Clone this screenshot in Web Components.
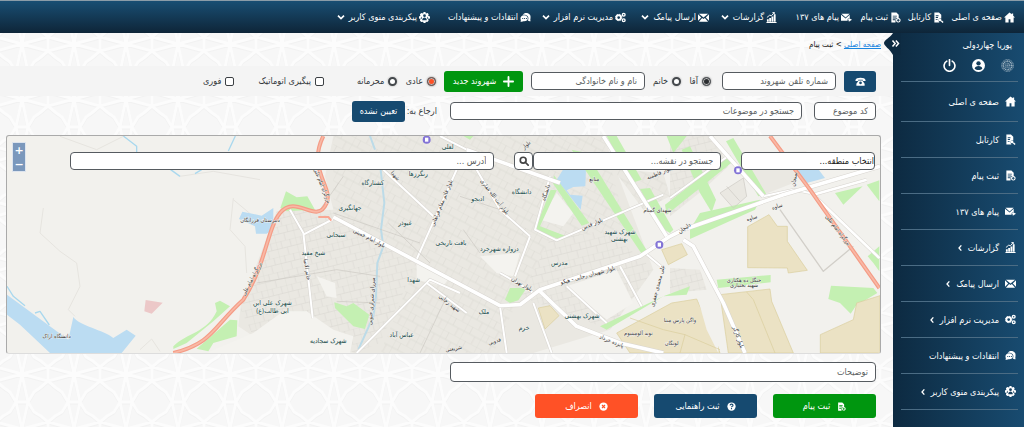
<!DOCTYPE html>
<html lang="fa" dir="rtl">
<head>
<meta charset="utf-8">
<meta name="viewport" content="width=device-width, initial-scale=1">
<title>ثبت پیام</title>
<style>
  body { margin: 0; font-family: "DejaVu Sans Condensed", "DejaVu Sans", sans-serif; font-size: 9px; color: #33383c; background: #f8f8f8; }
</style>
</head>
<body>
<app-shell></app-shell>
<script>
const ICONS = {
  home: '<path d="M12 1 0 12h3v11h7v-7h4v7h7V12h3L20 8V3h-3v2z"/>',
  file: '<path fill-rule="evenodd" d="M3 1h10l5 5v7a5 5 0 0 0-5 8l1 2H3zM6 7v2h6V7zm0 4v2h5v-2zm0 4v2h4v-2z"/><path d="M12 14h6v6h-6z"/><path d="m18 19 4 4" stroke="currentColor" stroke-width="3"/>',
  fileplus: '<path fill-rule="evenodd" d="M3 1h11l5 5v7h-4l-3 3v7H3zM6 8v2h9V8zm0 4v2h8v-2zm0 4v2h5v-2z"/><path fill-rule="evenodd" d="M18 13a5 5 0 1 0 .1 0zm-1 2h2v2h2v2h-2v2h-2v-2h-2v-2h2z"/>',
  mailfwd: '<path d="M1 4h18l-9 8zM0 6l10 8 9-8v7l-5 2v4H0z"/><path d="m17 13 7 4-7 4v-3h-3v-2h3z"/>',
  chart: '<path d="M2 16h4v5H2zm5-3h4v8H7zm5-3h4v11h-4zm5-5h4v16h-4zM1 22h22v2H1z"/><path d="m2 12 6-5 4 1 6-7m-4 0h4v4" fill="none" stroke="currentColor" stroke-width="2"/>',
  mail: '<path d="M2 4h20l-10 8zM0 5v14l7-7zM24 5v14l-7-7zM9 13l3 2 3-2 7 8H2z"/>',
  gears: '<circle cx="8" cy="12" r="5" fill="none" stroke="currentColor" stroke-width="4"/><circle cx="8" cy="12" r="7" fill="none" stroke="currentColor" stroke-width="2" stroke-dasharray="3 2.5"/><circle cx="19" cy="6" r="3" fill="none" stroke="currentColor" stroke-width="3"/><circle cx="19" cy="18" r="3" fill="none" stroke="currentColor" stroke-width="3"/>',
  chat: '<path fill-rule="evenodd" d="M9 3c9-3 15 3 14 9 0 3-1 4 0 8-3 0-4-1-6-1 4-8-1-14-11-13z"/><path fill-rule="evenodd" d="M9 7c5 0 8 3 8 7s-3 6-8 6c-2 0-4 1-8 1 2-3 0-4 0-7 0-4 3-7 8-7zm-4 6v2h2v-2zm4 0v2h2v-2zm4 0v2h2v-2z"/>',
  usergear: '<path d="M10 0h4l1 3 4-1 2 3-1 3 4 2v4l-4 1 1 4-3 3-3-1-1 3h-4l-1-3-4 1-3-3 1-4-3-1v-4l3-2-1-3 3-3 4 1z"/><g fill="#173f5e"><circle cx="12" cy="8" r="3"/><path d="M7 18c0-8 10-8 10 0zM3 14l3-4v5zM21 14l-3-4v5z"/></g>',
  phone: '<path fill-rule="evenodd" d="M1 9c1-7 21-7 22 0v2h-6V8H7v3H1zM8 10h8l5 7v4H3v-4zm4 2a3 3 0 1 0 .1 0z"/>',
  plus: '<path d="M12 2v20M2 12h20" stroke="currentColor" stroke-width="4" stroke-linecap="round"/>',
  search: '<circle cx="10" cy="10" r="7" fill="none" stroke="currentColor" stroke-width="4"/><path d="m15 15 7 7" stroke="currentColor" stroke-width="4" stroke-linecap="round"/>',
  help: '<circle cx="12" cy="12" r="11"/><path d="M8 9c1-5 8-4 8 0 0 3-4 2-4 5m0 2v3" fill="none" stroke="#164a70" stroke-width="3"/>',
  cancel: '<circle cx="12" cy="12" r="11"/><path d="m8 8 8 8m0-8-8 8" stroke="#ff5126" stroke-width="3"/>',
  down: '<path d="m3 8 9 9 9-9" fill="none" stroke="currentColor" stroke-width="5"/>',
  left: '<path d="m16 4-7 8 7 8" fill="none" stroke="currentColor" stroke-width="4"/>',
  double: '<path d="m4 4 7 8-7 8M13 4l7 8-7 8" fill="none" stroke="currentColor" stroke-width="4"/>',
  power: '<path d="M7 4a10 10 0 1 0 10 0M12 1v11" fill="none" stroke="currentColor" stroke-width="3" stroke-linecap="round"/>',
  user: '<circle cx="12" cy="12" r="12"/><g fill="#143d5b"><circle cx="12" cy="8" r="4"/><path d="M5 18c0-7 14-7 14 0-3 3-11 3-14 0z"/></g>',
  rosette: '<g fill="none" stroke="#9fb3c2" stroke-width="1.5"><circle cx="12" cy="12" r="11" stroke-dasharray="2 1"/><circle cx="12" cy="12" r="8" stroke-dasharray="2 1" stroke-width="3"/><circle cx="12" cy="12" r="4" stroke-dasharray="1 1" stroke-width="3"/><circle cx="12" cy="12" r="1"/></g>'
};

const MENU = [
  ['home', 'صفحه ی اصلی'], ['file', 'کارتابل'], ['fileplus', 'ثبت پیام'], ['mailfwd', 'پیام های ۱۳۷'],
  ['chart', 'گزارشات', true], ['mail', 'ارسال پیامک', true], ['gears', 'مدیریت نرم افزار', true],
  ['chat', 'انتقادات و پیشنهادات'], ['usergear', 'پیکربندی منوی کاربر', true]
];

class Base extends HTMLElement {
  connectedCallback() {
    if (!this.shadowRoot) this.attachShadow({ mode: 'open' }).innerHTML = '<style>*{box-sizing:border-box}</style>' + this.render();
  }
}

customElements.define('ui-icon', class extends Base {
  render() {
    return `<style>:host{display:inline-flex;flex:none;width:11px;height:11px}svg{width:100%;height:100%;display:block}</style>
    <svg viewBox="0 0 24 24" fill="currentColor" aria-hidden="true">${ICONS[this.getAttribute('name')]}</svg>`;
  }
});

customElements.define('top-nav', class extends Base {
  render() {
    return `<style>
      :host{display:block;background:linear-gradient(#194e73,#0e2538);border-top:1px solid #8b9ca8;color:#fff}
      nav{display:grid;grid-template-columns:71fr 43fr 49fr 75fr 68fr 83fr 95fr 101fr 430fr;height:32px;align-items:center;padding-inline-start:9px}
      a{display:flex;align-items:center;gap:2px;color:inherit;text-decoration:none;white-space:nowrap;width:0}
      ui-icon.more{width:8px;height:8px;margin-inline-start:2px}
    </style><nav aria-label="منوی بالا">${MENU.map(([i, t, m]) =>
      `<a href="#"><ui-icon name="${i}"></ui-icon><span>${t}</span>${m ? '<ui-icon class="more" name="down"></ui-icon>' : ''}</a>`).join('')}</nav>`;
  }
});

customElements.define('side-nav', class extends Base {
  render() {
    return `<style>
      :host{display:block;position:relative;background:linear-gradient(to right,#0d2a41,#184b70);color:#fff;padding:0 6px 0 8px}
      header{border-bottom:1px solid #4b6c84;height:49px;padding-top:6px}
      .name{display:block;line-height:12px;padding-inline-start:6px}
      .tools{display:flex;gap:16px;padding-top:8px;padding-inline-start:4px}
      button{all:unset;display:flex;cursor:pointer}
      .tools ui-icon{width:13px;height:13px}
      ul{list-style:none;margin:0;padding:0}
      li{border-bottom:1px solid #4b6c84;height:36px}
      li:first-child{height:40px}
      a{display:flex;align-items:center;gap:6px;height:100%;color:inherit;text-decoration:none;white-space:nowrap;padding-inline-start:2px}
      ui-icon.more{width:8px;height:8px;margin-inline-start:-2px}
      .tab{position:absolute;left:-9px;top:0;width:17px;height:22px}
      .tab svg{position:absolute;inset:0}
      .tab ui-icon{position:absolute;right:1px;top:6px;width:9px;height:9px}
    </style>
    <button class="tab" aria-label="بستن منو"><svg width="17" height="22" viewBox="0 0 17 22"><path d="M9 0C6 5 0 7 0 10s6 6 9 12h8V0z" fill="#0d2a41"/></svg><ui-icon name="double"></ui-icon></button>
    <header><span class="name">پوریا چهاردولی</span><div class="tools">
      <button aria-label="نشان"><ui-icon name="rosette"></ui-icon></button><button aria-label="کاربر"><ui-icon name="user"></ui-icon></button><button aria-label="خروج"><ui-icon name="power"></ui-icon></button></div></header>
    <nav aria-label="منوی کناری"><ul>${MENU.map(([i, t, m]) =>
      `<li><a href="#"><ui-icon name="${i}"></ui-icon><span>${t}</span>${m ? '<ui-icon class="more" name="left"></ui-icon>' : ''}</a></li>`).join('')}</ul></nav>`;
  }
});

const FIELD = `input,select{font:inherit;color:#33383c;min-width:0;width:100%;height:18px;border:1px solid #565b60;border-radius:4px;background:#fff;padding:0 7px;outline:0}
  input::placeholder{color:#5c5f62;opacity:1}`;

customElements.define('text-field', class extends Base {
  render() {
    const l = this.getAttribute('label');
    return `<style>:host{display:block;min-width:0}${FIELD}input{height:var(--field-height,18px)}</style><input type="text" aria-label="${l}" placeholder="${l}">`;
  }
});

customElements.define('ui-button', class extends Base {
  render() {
    return `<style>:host{display:block;min-width:0;--bg:#164a70}
      button{font:inherit;color:#fff;background:var(--bg);border:0;border-radius:3px;width:100%;height:var(--h,21px);display:flex;align-items:center;justify-content:center;gap:7px;padding:0;white-space:nowrap}
      :host([tone=green]){--bg:#00960f}:host([tone=orange]){--bg:#ff5126}</style>
      <button type="button" aria-label="${this.getAttribute('label') || this.textContent}"><slot name="icon"></slot><slot></slot></button>`;
  }
});

customElements.define('choice-box', class extends Base {
  render() {
    const type = this.getAttribute('type'), on = this.hasAttribute('checked');
    return `<style>:host{display:block;--dot:#2a2d30}:host([hot]){--dot:#ff5126}
      label{display:flex;align-items:center;gap:4px;white-space:nowrap}
      input{appearance:none;margin:0;width:9px;height:9px;border:1px solid #3c4044;background:#fff;border-radius:2px;flex:none}
      input[type=radio]{border:2px solid #44484c;border-radius:50%;box-shadow:0 0 2px #999}
      input[type=radio]:checked{border:1px solid #55595d;background:var(--dot);box-shadow:0 0 2px #777,inset 0 0 0 1px #bbb}</style>
      <label><input type="${type}" ${on ? 'checked' : ''}><span><slot></slot></span></label>`;
  }
});

customElements.define('message-head', class extends Base {
  render() {
    return `<style>:host{display:block}
      .row{display:grid;column-gap:8px;align-items:center;padding-inline:17px 6px}
      .one{background:#f4f4f4;height:30px;grid-template-columns:32fr 114fr 61fr 114fr 79fr 79fr 146fr 189fr}
      .two{height:30px;column-gap:12px;grid-template-columns:62fr 352fr 86fr 334fr}
      .set{display:flex;justify-content:space-between;min-width:0}
      .gender{padding-inline-start:3px}.flags{padding-inline-start:25px}
      .refer{display:flex;align-items:center;justify-content:space-between;white-space:nowrap;padding-inline-start:1px}
      .refer ui-button{flex:0 0 53px}
    </style>
    <div class="row one">
      <ui-button label="تماس"><ui-icon slot="icon" name="phone"></ui-icon></ui-button>
      <text-field label="شماره تلفن شهروند"></text-field>
      <div class="set gender"><choice-box type="radio" checked>آقا</choice-box><choice-box type="radio">خانم</choice-box></div>
      <text-field label="نام و نام خانوادگی"></text-field>
      <ui-button tone="green"><ui-icon slot="icon" name="plus"></ui-icon>شهروند جدید</ui-button>
      <div class="set"><choice-box type="radio" checked hot>عادی</choice-box><choice-box type="radio">محرمانه</choice-box></div>
      <div class="set flags"><choice-box type="checkbox">پیگیری اتوماتیک</choice-box><choice-box type="checkbox">فوری</choice-box></div>
    </div>
    <div class="row two">
      <text-field label="کد موضوع"></text-field>
      <text-field label="جستجو در موضوعات"></text-field>
      <div class="refer"><span>ارجاع به:</span><ui-button>تعیین نشده</ui-button></div>
    </div>`;
  }
});

/* Map drawing units: three per pixel. */
const poly = (fill, ...ds) => ds.map(d => `<path d="${d}" fill="${fill}"/>`).join('');
const line = (stroke, w, ...ds) => ds.map(d => `<path d="${d}" fill="none" stroke="${stroke}" stroke-width="${w}" stroke-linejoin="round"/>`).join('');
const road = (w, ...ds) => line('#d8d5d0', w + 3, ...ds) + line('#fff', w, ...ds);
const PLACES = [
  ['لعلی',1343,58],['رنگرزها',1255,138],['کشتارگاه',1118,165],['جهانگیری',1050,240],['سبحانی',1008,323],['شیخ مفید',940,377],['غیوذر',1215,287],
  ['بافت تاریخی',1353,347],['شهدا',1241,456],['شهرک علی ابن',817,527],['ابی طالب(ع)',817,551],['شهرک سجادیه',985,640],['عباس آباد',1205,622],
  ['دانشگاه',1565,192],['ادبجو',1433,213],['دروازه شهرجرد',1498,364],['مدرس',1678,405],['ملک',1452,554],['خرم',1572,602],
  ['شهرک شهید',1860,312],['بهشتی',1858,335],['شهرک بهشتی',1746,565]
];
const STREETS = [
  ['بزرگراه امام علی',760,450,-62],['بزرگراه امام علی',962,170,68],['بزرگراه امام علی',2510,305,52],['بلوار امام خمینی',1105,330,27],['شهید رجایی',1345,525,38],
  ['میرزای شیرازی جنوبی',1120,515,-86],['خاتم الانبیا',916,420,82],['بلوار قائم مقام فراهانی',1330,222,-68],['بلوار آیت الله غفاری',1480,205,52],
  ['دانشگاه',1643,190,-72],['بلوار قدس',1778,288,-22],['بلوار شهیدان رجایی - هپکو',1765,442,-15],['بلوار تهران',1563,468,30],
  ['علی محمدی جعفری',1978,470,-75],['پانزده خرداد',1833,640,22],['فدویی',1485,640,-18],['شهدای گمنام',1972,248,0],['ساوه',2257,270,-18],['ساوه',2333,235,-18],
  ['دلیجان',2056,300,-36],['بلوار کارگر',2210,625,70],['سنجان',2388,150,-80],['شریعتی',1362,662,-10],['بلوار فاطمیه',1980,135,-22],['بلوار',1582,50,-45],['شهدا',1182,142,48],
  ['دانشگاه اراک',170,626,0],['دبیرستان فرزانگان',780,277,0],['جنگل ده هکتاری',2232,456,0],['شهید بختیاری',2232,472,0],['واگن پارس مبنا',2040,576,0],['نوید آلومینیوم',1915,617,0],['لونگان',2015,645,0],['منابع',1783,153,0]
];

customElements.define('city-map', class extends Base {
  render() {
    return `<style>:host{display:block;position:relative;height:219px;border:1px solid #aaa;border-bottom-color:#ddd;border-radius:3px;overflow:hidden;background:#f2f1ed}
      svg.map{display:block;width:100%;height:100%;font-family:"DejaVu Sans Condensed","DejaVu Sans",sans-serif}
      .bar{position:absolute;top:16px;left:0;right:0;display:grid;grid-template-columns:134fr 20fr 188fr 19fr 20fr 425fr 63fr;padding-inline-start:5px}
      ${FIELD}
      select{appearance:none;padding:0;color:#222}
      .find{display:flex;align-items:center;justify-content:center;height:18px;border:1px solid #565b60;border-radius:4px;background:#fff;color:#444;padding:0}
      .find ui-icon{width:10px;height:10px}
      .zoom{position:absolute;left:5px;top:6px;width:14px;display:grid;gap:0;border:1px solid #dde4ee}
      .zoom button{border:0;background:#7b98bc;color:#fff;font:bold 11px/13px "DejaVu Sans",sans-serif;height:14px;padding:0}
    </style>
    <svg class="map" viewBox="21 19 2619 651" preserveAspectRatio="xMidYMid slice" role="img" aria-label="نقشه شهر">
      <defs>
        <pattern id="ga" width="60" height="44" patternUnits="userSpaceOnUse" patternTransform="rotate(-14)"><path d="M0 0H60M0 22H60M0 0V44M16 0V22M31 22V44M44 0V22" stroke="#d8d5cf" stroke-width="1.5" fill="none"/></pattern>
        <pattern id="gb" width="56" height="48" patternUnits="userSpaceOnUse" patternTransform="rotate(28)"><path d="M0 0H56M0 24H56M0 0V48M19 0V24M38 24V48" stroke="#d8d5cf" stroke-width="1.5" fill="none"/></pattern>
      </defs>
      ${line('#e6e4df', 3, 'M130 235 120 310 180 365 230 400 240 470 205 540 225 560', 'M700 205 690 300 735 350 740 430', 'M700 210 760 260', 'M180 20 290 60 370 20', 'M540 140 640 125 780 150', 'M420 660 455 628 480 665')}
      ${line('#a9d8ee', 4, 'M370 19 410 50V70', 'M706 19 685 64', 'M512 120 540 140', 'M585 132 605 120', 'M21 470 40 500 75 528', 'M105 550 120 545 148 586')}
      ${poly('#eae8e2', 'M1000 19H1810L1960 420 1830 600 1600 670H1060L1000 660 920 545 760 620 715 590 722 530 830 245 1000 240 975 140z', 'M2010 19H2140L2185 110 2110 180 2010 260zM2220 70 2420 65 2380 160 2290 195zM2010 415 2100 420 2120 480 2010 490zM1840 119 1990 130 2010 200 1930 240z', 'M2160 190 2230 145 2240 200 2200 235z')}
      ${poly('url(#ga)', 'M722 540 830 245 1000 240 1250 400 1140 640 1060 670 920 545 760 620z', 'M1560 500 1650 330 1820 300 1960 420 1830 600z', 'M2010 19H2140L2185 110 2010 260z', 'M2010 415 2100 420 2120 480 2010 490z')}
      ${poly('url(#gb)', 'M1000 19H1810L1880 300 1650 330 1560 500 1480 670H1140L1250 400 1000 240z', 'M1840 119 1990 130 2010 200 1930 240z')}
      ${poly('#f4f3ef', 'M850 545 920 545 1000 600 1060 620 1050 670H620L760 610z', 'M1250 400 1350 440 1330 470 1250 450z', 'M1440 380 1560 370 1540 440 1490 430z', 'M1700 470 1850 420 1900 520 1820 570z', 'M1670 190 1720 250 1690 290 1620 270z', 'M950 440 1005 460 1010 505 980 500z')}
      ${poly('#bbdcf2', 'M21 495 205 630 220 562C240 590 310 600 340 625L380 600 407 618 365 670H150L60 585 21 555z', 'M727 246 785 258 820 235 820 300 800 312 768 312 765 290 717 268z', 'M1690 119H1758L1756 170 1720 172 1700 182 1710 195 1748 198 1742 240 1670 150z', 'M2385 119H2455L2475 145 2420 160z')}
      ${poly('#c4f0b2', 'M841 235 858 185 890 203 922 200 945 240 860 245z', 'M1003 518 1040 530 1060 520 1108 555 1095 598 1060 590 1005 535z', 'M520 650C560 610 620 610 650 545L645 520 660 513 690 530 640 575 560 640 520 658z', 'M590 657 690 570 712 572 710 620 640 640 625 665z',
        'M1662 137 1768 280 1745 288 1658 160z', 'M1652 180 1670 182 1620 290 1695 318 1685 332 1605 300z', 'M1515 510 1530 475 1580 475 1555 512 1530 520z', 'M1715 60 1760 70 1945 370 1925 372z', 'M1820 19H1850L1925 150 1895 160z', 'M1920 178 1950 175 2020 300 2010 310 1985 295z', 'M1995 225 2190 75 2200 95 2000 255z', 'M2000 19H2060L2020 70z', 'M2045 60 2070 50 2148 210 2135 248 2100 190z', 'M2178 35 2200 25 2300 195 2275 200z', 'M2070 300 2100 250 2280 210 2265 240 2070 328z',
        'M1800 590 1990 500 2070 470 2060 495 1990 500 1820 600z', 'M2150 450 2312 436V458L2155 475z', 'M2493 468 2620 475 2632 490 2568 528 2552 552 2520 520 2485 508z', 'M2505 190 2588 170 2530 225z', 'M2600 165 2638 152V215z', 'M2603 380 2638 350V425L2620 400z', 'M1390 19H1420L1410 30z')}
      ${poly('#ecc8c8', 'M437 511 488 519 455 552 433 545z')}
      <g stroke="#d9cd9c" stroke-width="2">${poly('#ebe2c4', 'M2243 291 2307 255 2332 290H2362V335L2422 422 2365 430 2362 415 2243 414z', 'M2160 495 2310 478 2315 515 2380 670H2185z', 'M1850 610 2015 520 2090 508 2150 640 2160 670H1890z', 'M1615 535 1650 528 1677 558 1635 598z', 'M1985 360 2045 342 2062 375 2005 405z', 'M2461 615 2560 570 2570 520 2640 498V670H2461z')}</g>
      ${poly('#f2f1ed', 'M2095 512 2150 520 2155 670 2120 600z')}
      ${line('#d9cd9c', 2, 'M1890 565 1990 600 2055 615 2160 660', 'M2055 615 2040 670', 'M2240 487 2260 510 2325 670')}
      <g stroke-linejoin="round">${line('#bcdbe8', 6, 'M1110 19 1125 60M1142 120 1153 220 1143 300 1150 350 1132 400 1128 500 1120 560 1075 660')}</g>
      ${road(6, 'M870 240 910 310 938 565', 'M910 315 1000 268', 'M1150 120 1300 260', 'M1370 120 1245 400', 'M1430 120 1500 240 1590 320', 'M1320 19 1400 60', 'M1590 320 1545 440', 'M1500 430 1570 470 1600 490', 'M1500 530 1520 670', 'M1650 140 1605 300 1670 332 1990 195', 'M1280 460 1400 550', 'M1380 490 1290 450 1070 670', 'M1860 410 1925 530', 'M1700 470 1820 580', 'M1935 370 1995 420', 'M1600 520 1655 670', 'M2190 75 2010 205', 'M2290 200 2380 180 2430 190')}
      ${line('#d2cfc9', 4, 'M2340 240 2470 425 2560 350')}
      ${line('#cbc8c2', 2, 'M1260 340 1000 250', 'M770 460 1010 420 1140 440', 'M1010 515 1140 520', 'M1030 140 960 240', 'M1380 200 1500 240M1390 300 1440 370M1165 280 1290 400', 'M1340 500 1260 670', 'M2160 190 2230 145 2240 200 2200 235z', 'M2180 170 2220 215')}
      ${road(11, 'M1000 262 1500 528 1560 525 1620 480 1920 380 2010 320 2050 300 2350 195 2640 110', 'M1400 60 1680 160', 'M1620 485 1730 590 1860 640 1990 670', 'M1810 19 2000 320', 'M2050 330 2080 350 2170 520 2235 670', 'M2130 19 2290 200')}
      ${road(8, 'M2440 195 2600 150', 'M2450 205 2638 385')}
      ${line('#f49c86', 12, 'M520 670C640 640 640 590 730 510 800 400 800 300 840 250 890 190 950 290 980 220 1000 170 920 120 970 19', 'M2310 19 2430 180 2638 475')}
      ${line('#f9b8a5', 5, 'M520 670C640 640 640 590 730 510 800 400 800 300 840 250 890 190 950 290 980 220 1000 170 920 120 970 19', 'M2310 19 2430 180 2638 475')}
      ${line('#f9a793', 6, 'M955 262 985 262 994 273')}
      ${[[1280,30],[1978,345],[2214,122]].map(([x, y]) => `<circle cx="${x}" cy="${y}" r="12" fill="#8273d6"/><rect x="${x - 5}" y="${y - 6}" width="10" height="12" fill="#fff"/>`).join('')}
      <g text-anchor="middle" direction="rtl">
        <g font-size="20" fill="#124848" stroke="#f2f1ed" stroke-width="3" paint-order="stroke">${PLACES.map(([t, x, y]) => `<text x="${x}" y="${y}">${t}</text>`).join('')}</g>
        <g font-size="17" fill="#333" stroke="#f7f6f3" stroke-width="2" paint-order="stroke">${STREETS.map(([t, x, y, r]) => `<text transform="translate(${x} ${y}) rotate(${r})">${t}</text>`).join('')}</g>
      </g>
    </svg>
    <div class="bar">
      <select aria-label="انتخاب منطقه"><option>انتخاب منطقه...</option></select><i></i>
      <input type="text" aria-label="جستجو در نقشه" placeholder="جستجو در نقشه..."><button class="find" aria-label="جستجو"><ui-icon name="search"></ui-icon></button><i></i>
      <input type="text" aria-label="آدرس" placeholder="آدرس ...">
    </div>
    <div class="zoom"><button aria-label="بزرگ‌نمایی">+</button><button aria-label="کوچک‌نمایی">−</button></div>`;
  }
});

customElements.define('message-foot', class extends Base {
  render() {
    return `<style>:host{display:block;padding-block:8px 9px;padding-inline:17px 6px}
      .note{display:grid;grid-template-columns:426fr 444fr;--field-height:20px}
      .actions{display:grid;grid-template-columns:103fr 103fr 103fr 513fr;column-gap:16px;padding-top:12px;--h:24px}
      .actions ui-icon{width:9px;height:9px}
    </style>
    <div class="note"><text-field label="توضیحات"></text-field></div>
    <div class="actions">
      <ui-button tone="green"><ui-icon slot="icon" name="fileplus"></ui-icon>ثبت پیام</ui-button>
      <ui-button><ui-icon slot="icon" name="help"></ui-icon>ثبت راهنمایی</ui-button>
      <ui-button tone="orange"><ui-icon slot="icon" name="cancel"></ui-icon>انصراف</ui-button>
    </div>`;
  }
});

const tile = encodeURIComponent(`<svg xmlns="http://www.w3.org/2000/svg" width="52" height="55"><defs><g id="g" fill="none"><path d="M26 27 0 20M26 27 0 34M26 27 52 20M26 27 52 34M26 27 20 0M26 27 32 0M26 27 20 55M26 27 32 55M0 20 7 14 14 10 20 0M52 20 45 14 38 10 32 0M0 34 7 40 14 45 20 55M52 34 45 40 38 45 32 55M-3 20H3M-3 34H3M49 20h6M49 34h6M20 0h12M20 55h12M0 20v14M52 20v14"/></g></defs><rect width="52" height="55" fill="#f7f7f7"/><use href="#g" stroke="#f2f2f2" stroke-width="3" y="1"/><use href="#g" stroke="#fcfcfc" stroke-width="3"/></svg>`);

customElements.define('app-shell', class extends Base {
  render() {
    return `<style>
      :host{display:flex;flex-direction:column;min-height:100vh}
      .body{display:flex;flex:1}
      side-nav{flex:0 0 131px}
      main{flex:1;min-width:0;background:#f7f7f7 url("data:image/svg+xml,${tile}") -4px -16px}
      .crumbs{height:33px;padding-top:5px;padding-inline-start:12px;font-size:8px;line-height:14px;color:#222}
      .crumbs a{color:#1b86e0}
      city-map{margin:9px 12px 0 6px}
    </style>
    <top-nav></top-nav>
    <div class="body">
      <side-nav></side-nav>
      <main>
        <div class="crumbs"><a href="#">صفحه اصلی</a> &gt; <span>ثبت پیام</span></div>
        <message-head></message-head>
        <city-map></city-map>
        <message-foot></message-foot>
      </main>
    </div>`;
  }
});
</script>
</body>
</html>
